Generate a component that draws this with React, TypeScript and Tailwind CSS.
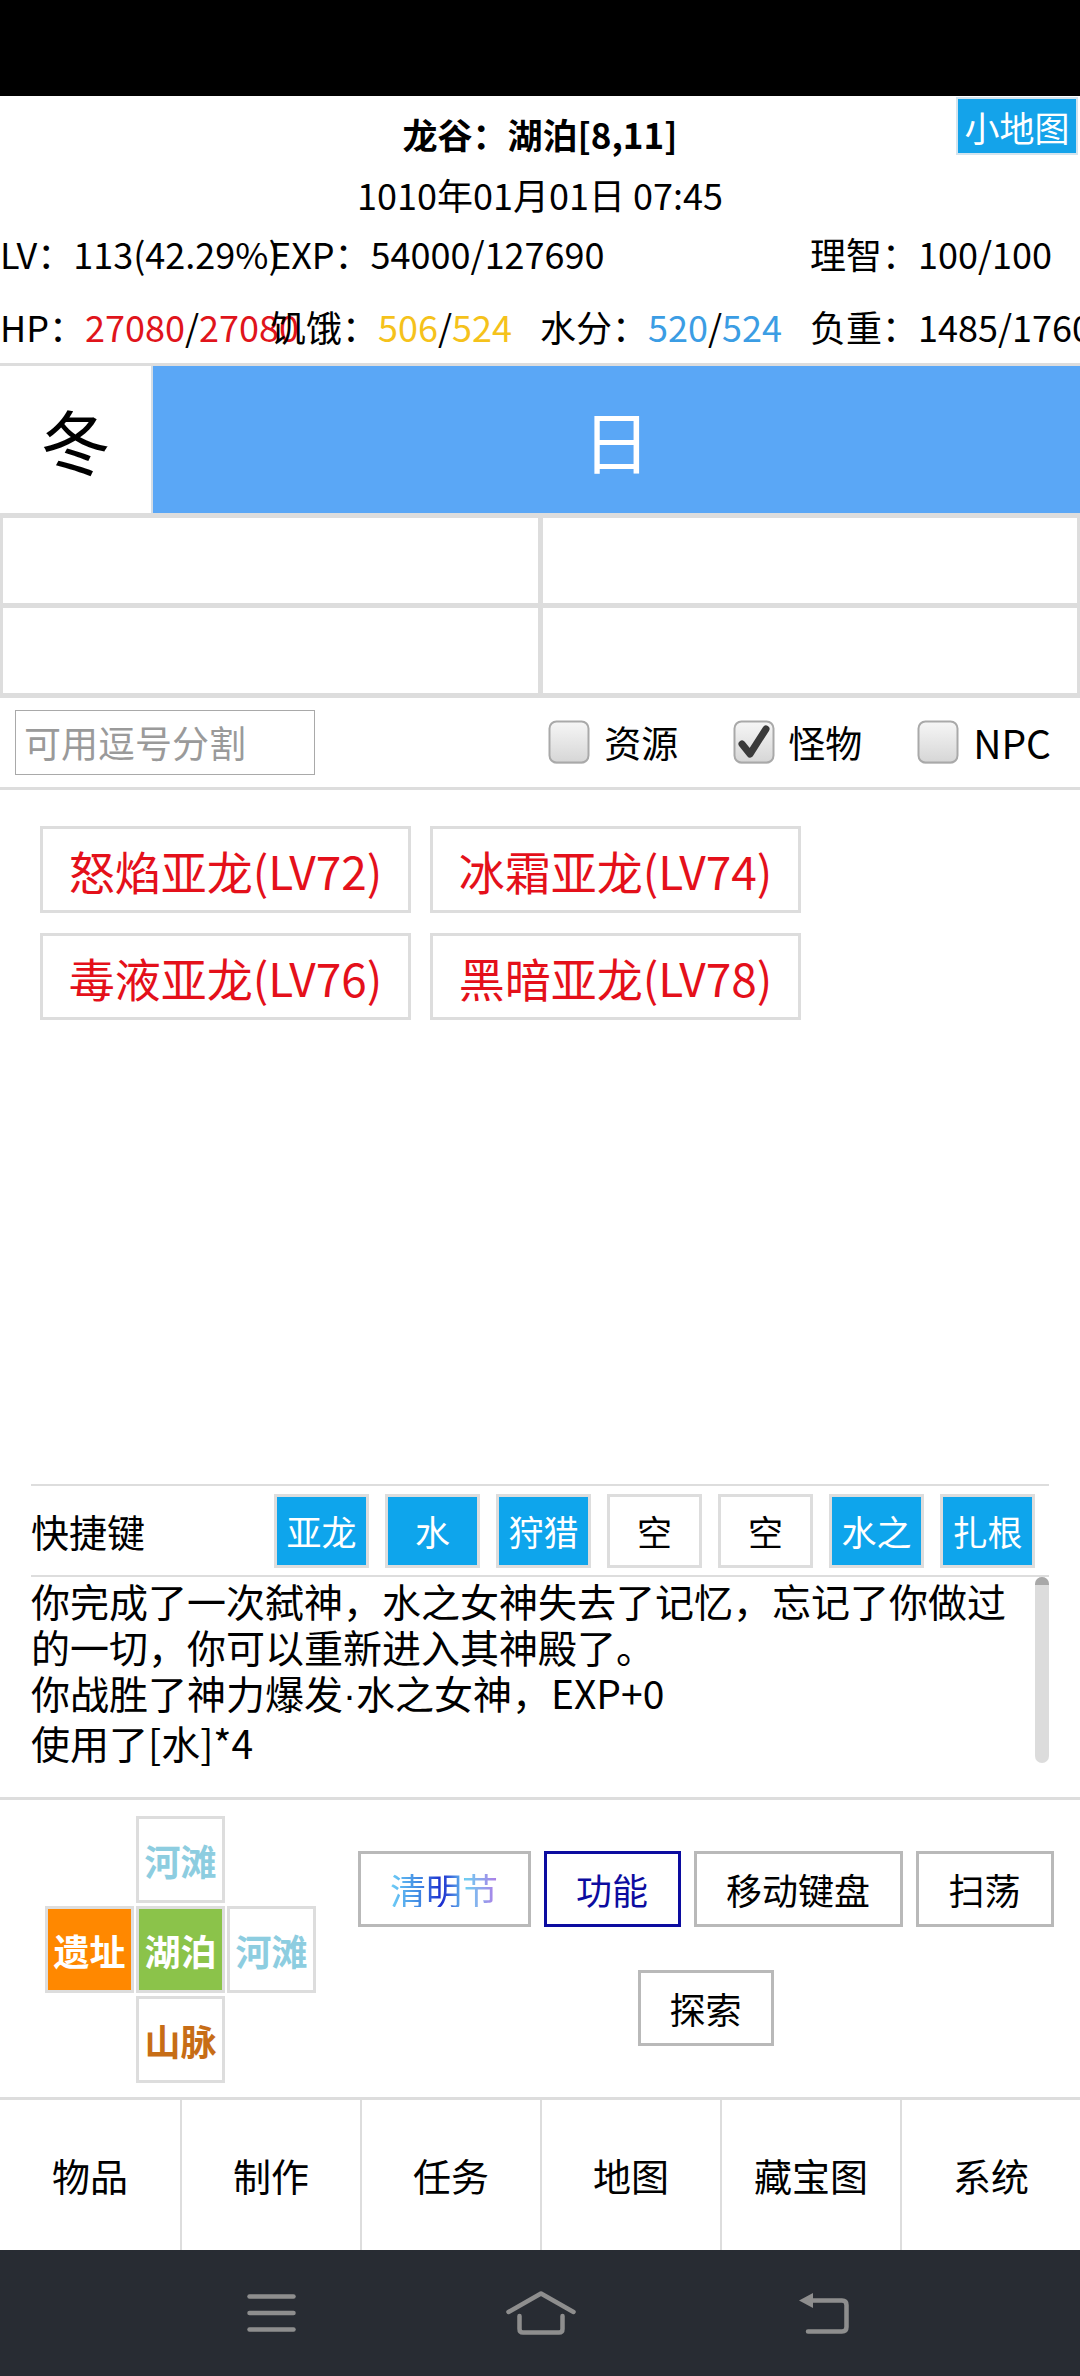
const monsters = ['怒焰亚龙(LV72)', '冰霜亚龙(LV74)', '毒液亚龙(LV76)', '黑暗亚龙(LV78)'];

const shortcuts = [
  { label: '亚龙', on: true },
  { label: '水', on: true },
  { label: '狩猎', on: true },
  { label: '空', on: false },
  { label: '空', on: false },
  { label: '水之', on: true },
  { label: '扎根', on: true },
];

const navItems = ['物品', '制作', '任务', '地图', '藏宝图', '系统'];

function CheckBox({ checked }: { checked?: boolean }) {
  return (
    <svg width="42" height="46" viewBox="0 0 42 46">
      <defs>
        <linearGradient id={checked ? 'cbg1' : 'cbg0'} x1="0" y1="0" x2="0" y2="1">
          <stop offset="0" stopColor="#f6f6f6" />
          <stop offset="1" stopColor="#d6d6d6" />
        </linearGradient>
      </defs>
      <rect x="1.5" y="3" width="39" height="41" rx="7" fill="#cfcfcf" opacity="0.6" />
      <rect x="1.5" y="1.5" width="39" height="41" rx="7" fill={`url(#${checked ? 'cbg1' : 'cbg0'})`} stroke="#a9a9a9" strokeWidth="2" />
      {checked && (
        <path d="M9 24 L17 34 L33 9" fill="none" stroke="#3a3a3a" strokeWidth="7" strokeLinejoin="round" strokeLinecap="round" />
      )}
    </svg>
  );
}

export default function App() {
  return (
    <div className="w-[1080px] h-[2376px] flex flex-col overflow-hidden bg-white text-black [font-family:'Noto_Sans_CJK_SC','Noto_Sans',sans-serif]">
      {/* status bar */}
      <div className="h-[96px] shrink-0 bg-black" />

      {/* location header */}
      <div className="relative h-[74px] shrink-0 flex items-center justify-center text-[35px] font-bold leading-none">
        龙谷：湖泊[8,11]
        <div className="absolute right-[2px] top-[1px] w-[122px] h-[58px] flex items-center justify-center bg-[#14a3ea] border-2 border-[#d3e4ee] text-white text-[35px] font-normal">
          小地图
        </div>
      </div>
      <div className="h-[48px] shrink-0 flex items-center justify-center text-[36px] leading-none">
        1010年01月01日 07:45
      </div>

      <div className="h-[70px] shrink-0 grid grid-cols-4 items-center whitespace-nowrap text-[36px] leading-none">
        <div>LV：113(42.29%)</div>
        <div>EXP：54000/127690</div>
        <div />
        <div>理智：100/100</div>
      </div>
      <div className="h-[75px] shrink-0 grid grid-cols-4 items-center whitespace-nowrap text-[36px] leading-none">
        <div>
          HP：<span className="text-[#e0141b]">27080</span>/<span className="text-[#e0141b]">27080</span>
        </div>
        <div>
          饥饿：<span className="text-[#f5c21b]">506</span>/<span className="text-[#f5c21b]">524</span>
        </div>
        <div>
          水分：<span className="text-[#3b9de4]">520</span>/<span className="text-[#3b9de4]">524</span>
        </div>
        <div>负重：1485/1760</div>
      </div>

      {/* season / weather */}
      <div className="shrink-0 bg-[#dddddd] pt-[3px] pb-[5px]">
        <div className="flex h-[147px]">
          <div className="w-[151px] bg-white flex items-center justify-center text-[70px] leading-none">冬</div>
          <div className="w-[2px] bg-[#d2dce6]" />
          <div className="flex-1 bg-[#5aa7f6] flex items-center justify-center text-white text-[68px] leading-none">日</div>
        </div>
      </div>
      <div className="shrink-0 bg-[#dddddd] px-[3px] pb-[5px] grid grid-cols-2 gap-[5px]">
        <div className="h-[85px] bg-white" />
        <div className="h-[85px] bg-white" />
        <div className="h-[85px] bg-white" />
        <div className="h-[85px] bg-white" />
      </div>

      {/* filter */}
      <div className="h-[92px] shrink-0 flex items-center border-b-[3px] border-[#dddddd] pl-[15px] pr-[29px]">
        <div className="w-[300px] h-[65px] border border-[#a9a9a9] flex items-center pl-[8px] text-[37px] text-[#9a9a9a] leading-none">
          可用逗号分割
        </div>
        <div className="ml-auto flex items-center gap-[55px] text-[37px] leading-none">
          <div className="flex items-center gap-[14px]">
            <CheckBox />
            <span>资源</span>
          </div>
          <div className="flex items-center gap-[13px]">
            <CheckBox checked />
            <span>怪物</span>
          </div>
          <div className="flex items-center gap-[14px]">
            <CheckBox />
            <span className="text-[39px]">NPC</span>
          </div>
        </div>
      </div>

      {/* monsters */}
      <div className="flex-1 pt-[36px] pl-[40px]">
        <div className="grid grid-cols-[371px_371px] gap-x-[19px] gap-y-[20px]">
          {monsters.map((m) => (
            <div key={m} className="h-[87px] border-[3px] border-[#dddddd] flex items-center justify-center text-[#e4101a] text-[46px] leading-none whitespace-nowrap">
              {m}
            </div>
          ))}
        </div>
      </div>

      {/* shortcut bar + log */}
      <div className="shrink-0 mx-[31px] h-[313px] flex flex-col">
        <div className="h-[2px] bg-[#dddddd]" />
        <div className="h-[89px] flex items-center">
          <div className="w-[243px] text-[38px] leading-none">快捷键</div>
          <div className="flex gap-[16px]">
            {shortcuts.map((s, i) => (
              <div
                key={i}
                className={
                  s.on
                    ? 'w-[95px] h-[74px] border-[3px] border-[#dddddd] bg-[#0ea5ec] text-white flex items-center justify-center text-[35px] leading-none'
                    : 'w-[95px] h-[74px] border-[3px] border-[#dddddd] bg-white text-black flex items-center justify-center text-[35px] leading-none'
                }
              >
                {s.label}
              </div>
            ))}
          </div>
        </div>
        <div className="h-[2px] bg-[#dddddd]" />
        <div className="h-[186px] flex">
          <div className="flex-1 text-[39px] leading-[46px]">
            <div>你完成了一次弑神，水之女神失去了记忆，忘记了你做过的一切，你可以重新进入其神殿了。</div>
            <div>
              你战胜了神力爆发<span className="[font-family:'Liberation_Sans',sans-serif]">·</span>水之女神，EXP+0
            </div>
            <div>使用了[水]*4</div>
          </div>
          <div className="w-[14px] h-[186px] rounded-full bg-[#dcdcdc] flex flex-col overflow-hidden">
            <div className="h-[8px] bg-[#a8a8a8]" />
          </div>
        </div>
      </div>

      <div className="h-[3px] shrink-0 bg-[#dddddd]" />

      {/* map pad + actions */}
      <div className="h-[297px] shrink-0 flex pt-[16px] pl-[45px]">
        <div className="grid grid-cols-[89px_89px_89px] grid-rows-[87px_87px_87px] gap-x-[2px] gap-y-[3px] text-[36px] font-bold leading-none">
          <div />
          <div className="border-[3px] border-[#dddddd] flex items-center justify-center text-[#8dcde0]">河滩</div>
          <div />
          <div className="border-[3px] border-[#dddddd] bg-[#ff8800] flex items-center justify-center text-white">遗址</div>
          <div className="border-[3px] border-[#dddddd] bg-[#8bc34a] flex items-center justify-center text-white">湖泊</div>
          <div className="border-[3px] border-[#dddddd] flex items-center justify-center text-[#8dcde0]">河滩</div>
          <div />
          <div className="border-[3px] border-[#dddddd] flex items-center justify-center text-[#c76d16]">山脉</div>
          <div />
        </div>
        <div className="flex-1 pl-[15px] pt-[35px] flex flex-wrap justify-center content-start gap-x-[13px] gap-y-[43px] text-[36px] leading-none">
          <div className="w-[173px] h-[76px] border-[3px] border-[#b9b9b9] flex items-center justify-center">
            <span className="bg-[linear-gradient(90deg,#6fd0f8_0%,#3f86e2_28%,#1c2ccf_48%,#6fcff2_70%,#b07ae6_100%)] bg-clip-text text-transparent">
              清明节
            </span>
          </div>
          <div className="w-[137px] h-[76px] border-[3px] border-[#0c0ca0] text-[#0c0ca0] flex items-center justify-center">功能</div>
          <div className="w-[209px] h-[76px] border-[3px] border-[#b9b9b9] flex items-center justify-center">移动键盘</div>
          <div className="w-[138px] h-[76px] border-[3px] border-[#b9b9b9] flex items-center justify-center">扫荡</div>
          <div className="w-[136px] h-[76px] border-[3px] border-[#b9b9b9] flex items-center justify-center">探索</div>
        </div>
      </div>

      <div className="h-[3px] shrink-0 bg-[#dddddd]" />

      {/* bottom nav */}
      <div className="h-[150px] shrink-0 grid grid-cols-6">
        {navItems.map((n, i) => (
          <div
            key={n}
            className={
              i === 0
                ? 'flex items-center justify-center text-[38px] leading-none'
                : 'flex items-center justify-center text-[38px] leading-none border-l-2 border-[#dddddd]'
            }
          >
            {n}
          </div>
        ))}
      </div>

      {/* android nav bar */}
      <div className="h-[126px] shrink-0 bg-[#282c33] flex items-center">
        <svg className="ml-[247px]" width="49" height="38" viewBox="0 0 49 38">
          <g stroke="#8e8e8e" strokeWidth="4.5" strokeLinecap="round">
            <line x1="2.5" y1="2.5" x2="46.5" y2="2.5" />
            <line x1="2.5" y1="19" x2="46.5" y2="19" />
            <line x1="2.5" y1="35.5" x2="46.5" y2="35.5" />
          </g>
        </svg>
        <svg className="ml-[210px]" width="70" height="44" viewBox="0 0 70 44">
          <g fill="none" stroke="#8e8e8e" strokeWidth="4.5" strokeLinecap="round" strokeLinejoin="round">
            <path d="M2.5 21 L35 2.5 L67.5 21" />
            <path d="M13.5 25 V38 Q13.5 41.5 17 41.5 H53 Q56.5 41.5 56.5 38 V25" />
          </g>
        </svg>
        <svg className="ml-[222px]" width="52" height="42" viewBox="0 0 52 42">
          <path d="M1 8.5 L15 1 L15 16 Z" fill="#8e8e8e" />
          <path d="M13 8.5 H44 Q48.5 8.5 48.5 13 V35 Q48.5 39.5 44 39.5 H10" fill="none" stroke="#8e8e8e" strokeWidth="4.5" strokeLinecap="round" strokeLinejoin="round" />
        </svg>
      </div>
    </div>
  );
}
